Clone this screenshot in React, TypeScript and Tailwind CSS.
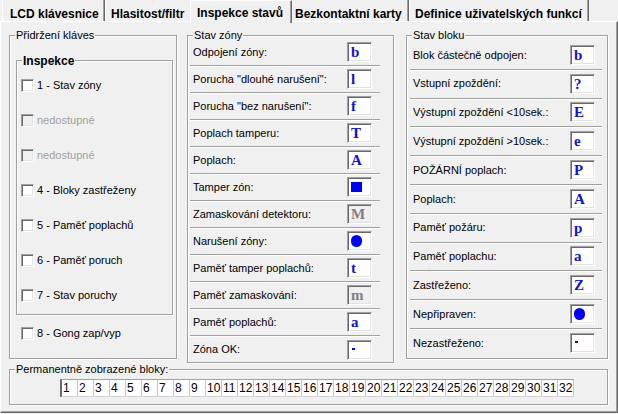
import clsx from "clsx"

type Row = { label: string; glyph: string; off?: boolean }

const zoneRows: Row[] = [
  { label: "Odpojení zóny:", glyph: "b" },
  { label: 'Porucha "dlouhé narušení":', glyph: "l" },
  { label: 'Porucha "bez narušení":', glyph: "f" },
  { label: "Poplach tamperu:", glyph: "T" },
  { label: "Poplach:", glyph: "A" },
  { label: "Tamper zón:", glyph: "#sq" },
  { label: "Zamaskování detektoru:", glyph: "M", off: true },
  { label: "Narušení zóny:", glyph: "#ci" },
  { label: "Paměť tamper poplachů:", glyph: "t" },
  { label: "Paměť zamaskování:", glyph: "m", off: true },
  { label: "Paměť poplachů:", glyph: "a" },
  { label: "Zóna OK:", glyph: "#dot" },
]

const blockRows: Row[] = [
  { label: "Blok částečně odpojen:", glyph: "b" },
  { label: "Vstupní zpoždění:", glyph: "?" },
  { label: "Výstupní zpoždění <10sek.:", glyph: "E" },
  { label: "Výstupní zpoždění >10sek.:", glyph: "e" },
  { label: "POŽÁRNÍ poplach:", glyph: "P" },
  { label: "Poplach:", glyph: "A" },
  { label: "Paměť požáru:", glyph: "p" },
  { label: "Paměť poplachu:", glyph: "a" },
  { label: "Zastřeženo:", glyph: "Z" },
  { label: "Nepřipraven:", glyph: "#ci" },
  { label: "Nezastřeženo:", glyph: "#dot" },
]

const inspekce = [
  { label: "1 - Stav zóny" },
  { label: "nedostupné", off: true },
  { label: "nedostupné", off: true },
  { label: "4 - Bloky zastřeženy" },
  { label: "5 - Paměť poplachů" },
  { label: "6 - Paměť poruch" },
  { label: "7 - Stav poruchy" },
]

const sunken =
  "border border-t-[#a0a0a0] border-l-[#a0a0a0] border-b-white border-r-white shadow-[inset_1px_1px_0_#696969,inset_-1px_-1px_0_#e3e3e3]"

function Group({ title, bold, className, children }: { title: string; bold?: boolean; className?: string; children?: React.ReactNode }) {
  return (
    <div className={clsx("relative border border-[#a0a0a0] shadow-[inset_1px_1px_0_#fff,1px_1px_0_#fff]", className)}>
      <span
        className={clsx(
          "absolute left-[5px] top-[-7px] whitespace-nowrap bg-[#f0f0f0] px-px",
          bold ? "text-[12px] font-bold leading-[14px]" : "text-[11px] leading-[13px]"
        )}
      >
        {title}
      </span>
      {children}
    </div>
  )
}

function Check({ label, off }: { label: string; off?: boolean }) {
  return (
    <div className="flex h-[35px] items-center gap-[3px]">
      <span className={clsx("h-[13px] w-[13px]", sunken, off ? "bg-[#f0f0f0]" : "bg-white")} />
      <span className={clsx("text-[11px]", off ? "text-[#a0a0a0]" : "text-black")}>{label}</span>
    </div>
  )
}

function Glyph({ g, off }: { g: string; off?: boolean }) {
  return (
    <div className={clsx("flex h-[20px] w-[25px] shrink-0 items-center", sunken, off ? "bg-[#f0f0f0]" : "bg-white")}>
      {g === "#sq" && <span className="ml-[3px] h-[10px] w-[11px] bg-[#0000ff]" />}
      {g === "#ci" && <span className="ml-[3px] h-[12px] w-[11px] rounded-full bg-[#0000ff]" />}
      {g === "#dot" && <span className="mb-[2px] ml-[4px] h-[2px] w-[3px] bg-[#0000ff]" />}
      {!g.startsWith("#") && (
        <span
          className={clsx(
            "pl-[3px] font-['Liberation_Serif',serif] text-[15px] font-bold leading-[16px]",
            off ? "text-[#808080]" : "text-[#1010e0]"
          )}
        >
          {g}
        </span>
      )}
    </div>
  )
}

function StatusRow({ row, last, wide }: { row: Row; last: boolean; wide?: boolean }) {
  return (
    <div
      className={clsx(
        "flex items-center justify-between",
        wide ? "ml-[3px] mr-[5px] h-[28.8px] pl-[3px] pr-[7px]" : "ml-[2px] mr-[13px] h-[27px] pl-[3px] pr-[8px]",
        !last && "border-b border-[#a0a0a0] shadow-[0_1px_0_#fff]"
      )}
    >
      <span className="whitespace-nowrap text-[11px]">{row.label}</span>
      <Glyph g={row.glyph} off={row.off} />
    </div>
  )
}

const tabBase = "h-[21px] overflow-hidden whitespace-nowrap pt-[7px] text-[12px] font-bold leading-[14px]"

export default function App() {
  return (
    <div className="relative h-[414px] w-[618px] overflow-hidden bg-[#f0f0f0] font-['Liberation_Sans',Arial,sans-serif] text-[11px] text-black">
      {/* tabs */}
      <div className="flex h-[21px] items-start pl-[2px]">
        <div className={clsx(tabBase, "w-[103px] border-l border-r border-l-white border-r-[#696969] pl-[7px] shadow-[inset_-1px_0_0_#a0a0a0]")}>
          LCD klávesnice
        </div>
        <div className={clsx(tabBase, "w-[85px] border-l border-l-white pl-[5px]")}>Hlasitost/filtr</div>
        <div className="relative z-10 h-[23px] w-[102px] whitespace-nowrap border-l border-r border-t border-l-white border-r-[#696969] border-t-white bg-[#f0f0f0] pl-[6px] pt-[5px] text-[12px] font-bold leading-[14px] shadow-[inset_-1px_0_0_#a0a0a0]">
          Inspekce stavů
        </div>
        <div className={clsx(tabBase, "w-[117px] border-r border-r-[#696969] pl-[3px] shadow-[inset_-1px_0_0_#a0a0a0]")}>
          Bezkontaktní karty
        </div>
        <div className={clsx(tabBase, "w-[180px] border-l border-r border-l-white border-r-[#696969] pl-[5px] shadow-[inset_-1px_0_0_#a0a0a0]")}>
          Definice uživatelských funkcí
        </div>
      </div>

      {/* page */}
      <div className="h-[392px] border border-b-[#696969] border-l-white border-r-[#696969] border-t-white pl-[8px] pt-[13px] shadow-[inset_-1px_-1px_0_#a0a0a0]">
        <div className="flex items-start">
          <Group title="Přidržení kláves" className="h-[324px] w-[168px]">
            <Group title="Inspekce" bold className="ml-[6px] mt-[24px] h-[255px] w-[157px] pl-[4px] pt-[7px]">
              {inspekce.map((c, i) => (
                <Check key={i} label={c.label} off={c.off} />
              ))}
            </Group>
            <div className="mt-px pl-[11px]">
              <Check label="8 - Gong zap/vyp" />
            </div>
          </Group>

          <Group title="Stav zóny" className="ml-[10px] h-[328px] w-[207px] pt-[3px]">
            {zoneRows.map((r, i) => (
              <StatusRow key={i} row={r} last={i === zoneRows.length - 1} />
            ))}
          </Group>

          <Group title="Stav bloku" className="ml-[12px] h-[324px] w-[202px] pt-[5px]">
            {blockRows.map((r, i) => (
              <StatusRow key={i} row={r} wide last={i === blockRows.length - 1} />
            ))}
          </Group>
        </div>

        <Group title="Permanentně zobrazené bloky:" className="mt-[6px] h-[36px] w-[599px]">
          <div className="ml-[50px] mt-[9px] flex w-fit border-b border-l-2 border-t border-b-[#d0d0d0] border-l-[#696969] border-t-[#a0a0a0] bg-white">
            {Array.from({ length: 32 }, (_, i) => (
              <span key={i} className="h-[16px] w-[16px] border-r border-[#c8c8c8] pl-px text-[12px] leading-[16px]">
                {i + 1}
              </span>
            ))}
          </div>
        </Group>
      </div>
    </div>
  )
}
